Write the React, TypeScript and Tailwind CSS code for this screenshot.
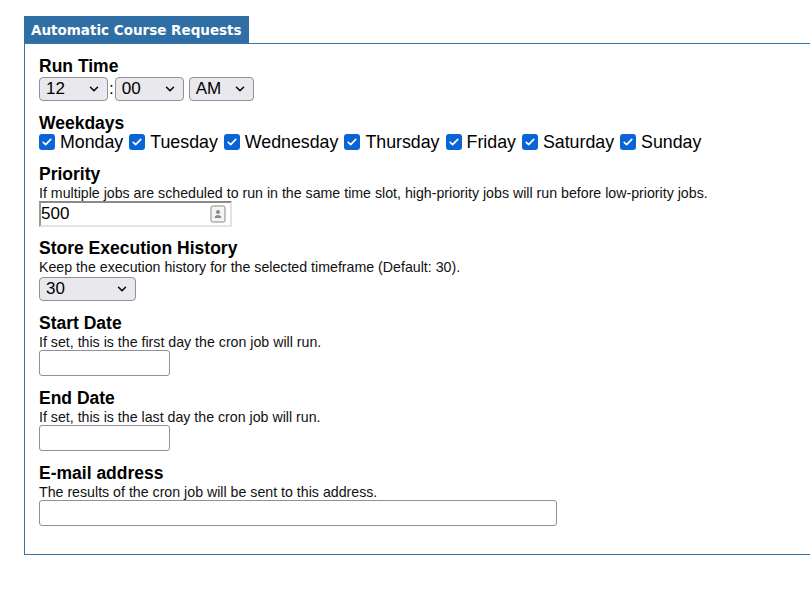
import { ChevronDown } from "lucide-react";

const DAYS = ["Monday", "Tuesday", "Wednesday", "Thursday", "Friday", "Saturday", "Sunday"];

function Select({ value, className }: { value: string; className: string }) {
  return (
    <div
      className={`flex h-[24px] items-center justify-between rounded-[4px] border border-[#8f8f9d] bg-[#e9e9ed] pl-[6px] pr-[6px] text-[17px] text-black ${className}`}
    >
      <span>{value}</span>
      <ChevronDown className="h-[14px] w-[14px]" strokeWidth={2.5} />
    </div>
  );
}

function Check({ label }: { label: string }) {
  return (
    <label className="flex h-[18px] items-center">
      <span className="mr-[5px] flex h-[16px] w-[16px] items-center justify-center rounded-[3px] bg-[#0b63d8]">
        <svg viewBox="0 0 16 16" className="h-[12px] w-[12px]">
          <path d="M3 8.5l3.2 3L13 4.5" fill="none" stroke="white" strokeWidth="2.2" strokeLinecap="round" strokeLinejoin="round" />
        </svg>
      </span>
      <span className="mr-[6px] text-[17.8px] leading-[18px]">{label}</span>
    </label>
  );
}

function Field({
  title,
  hint,
  children,
  className = "",
}: {
  title: string;
  hint?: string;
  children: React.ReactNode;
  className?: string;
}) {
  return (
    <div className={className}>
      <div className="text-[17.5px] font-bold leading-[18px]">{title}</div>
      {hint && <div className="mt-[3px] text-[14.2px] leading-[15px] text-[#111]">{hint}</div>}
      {children}
    </div>
  );
}

const textBox = "block h-[26px] rounded-[3px] border border-[#8f8f9d] bg-white";

export default function App() {
  return (
    <div className="min-h-[607px] bg-white pl-[24px] pt-[16px] text-black [font-family:'Liberation_Sans',Arial,sans-serif]">
      <div className="inline-block h-[27px] bg-[#2f6fa5] px-[7px] pt-[6px] text-[13.5px] font-bold leading-[17px] text-white [font-family:'DejaVu_Sans',Verdana,sans-serif]">
        Automatic Course Requests
      </div>
      <div className="h-[512px] border border-[#3574a8] border-r-0 pl-[14px] pt-[13px]">
        <Field title="Run Time">
          <div className="mt-[1px] flex items-center">
            <Select value="12" className="w-[69px]" />
            <span className="mx-[1px] text-[17px]">:</span>
            <Select value="00" className="w-[69px]" />
            <Select value="AM" className="ml-[5px] w-[65px]" />
          </div>
        </Field>

        <Field title="Weekdays" className="mt-[12px]">
          <div className="mt-[1px] flex">
            {DAYS.map((d) => (
              <Check key={d} label={d} />
            ))}
          </div>
        </Field>

        <Field
          title="Priority"
          hint="If multiple jobs are scheduled to run in the same time slot, high-priority jobs will run before low-priority jobs."
          className="mt-[14px]"
        >
          <div className="flex h-[26px] w-[193px] items-center justify-between border-2 border-b-[#e3e3e3] border-l-[#9a9a9a] border-r-[#e3e3e3] border-t-[#8a8a8a] bg-white pr-[4px]">
            <span className="text-[17px] leading-[18px]">500</span>
            <svg viewBox="0 0 16 18" className="h-[18px] w-[16px]">
              <rect x="1" y="1" width="14" height="16" rx="1.5" fill="#f4f4f4" stroke="#8a8a8a" />
              <circle cx="8" cy="7" r="2" fill="#8a8a8a" />
              <path d="M4.5 13c0-2 1.6-3 3.5-3s3.5 1 3.5 3z" fill="#8a8a8a" />
            </svg>
          </div>
        </Field>

        <Field
          title="Store Execution History"
          hint="Keep the execution history for the selected timeframe (Default: 30)."
          className="mt-[12px]"
        >
          <Select value="30" className="mt-[2px] h-[23px] w-[97px]" />
        </Field>

        <Field title="Start Date" hint="If set, this is the first day the cron job will run." className="mt-[13px]">
          <div className={`${textBox} w-[131px]`} />
        </Field>

        <Field title="End Date" hint="If set, this is the last day the cron job will run." className="mt-[13px]">
          <div className={`${textBox} w-[131px]`} />
        </Field>

        <Field
          title="E-mail address"
          hint="The results of the cron job will be sent to this address."
          className="mt-[13px]"
        >
          <div className={`${textBox} w-[518px]`} />
        </Field>
      </div>
    </div>
  );
}
